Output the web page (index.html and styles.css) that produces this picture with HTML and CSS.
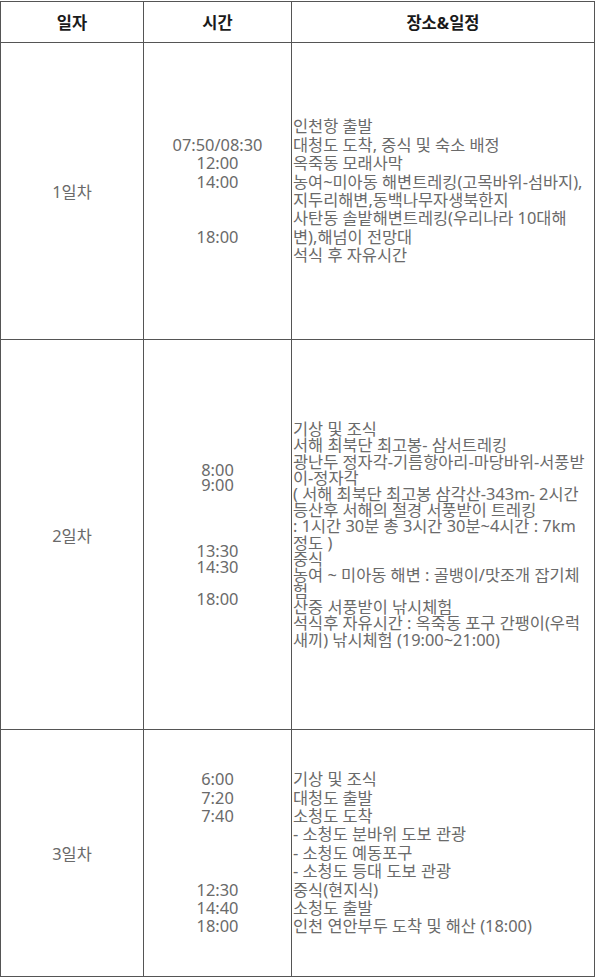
FILE: index.html
```html
<!DOCTYPE html>
<html lang="ko">
<head>
<meta charset="utf-8">
<title>일정표</title>
<link rel="stylesheet" href="styles.css">
</head>
<body>
<table class="schedule">
  <thead>
    <tr class="head-row">
      <th class="col-day">일자</th>
      <th class="col-time">시간</th>
      <th class="col-plan">장소&amp;일정</th>
    </tr>
  </thead>
  <tbody>
    <tr class="row-1">
      <td class="day">1일차</td>
      <td class="time">
        <div class="ln"></div>
        <div class="ln">07:50/08:30</div>
        <div class="ln">12:00</div>
        <div class="ln">14:00</div>
        <div class="ln"></div>
        <div class="ln"></div>
        <div class="ln">18:00</div>
        <div class="ln"></div>
      </td>
      <td class="plan">
        <div class="ln">인천항 출발</div>
        <div class="ln">대청도 도착, 중식 및 숙소 배정</div>
        <div class="ln">옥죽동 모래사막</div>
        <div class="ln">농여~미아동 해변트레킹(고목바위-섬바지),</div>
        <div class="ln">지두리해변,동백나무자생북한지</div>
        <div class="ln">사탄동 솔밭해변트레킹(우리나라 10대해</div>
        <div class="ln">변),해넘이 전망대</div>
        <div class="ln">석식 후 자유시간</div>
      </td>
    </tr>
    <tr class="row-2">
      <td class="day">2일차</td>
      <td class="time">
        <div class="ln ln-15">8:00</div>
        <div class="ln ln-15">9:00</div>
        <div class="gap-51"></div>
        <div class="ln ln-16">13:30</div>
        <div class="ln ln-16">14:30</div>
        <div class="gap-16"></div>
        <div class="ln ln-16">18:00</div>
      </td>
      <td class="plan tight">
        <div class="ln">기상 및 조식</div>
        <div class="ln">서해 최북단 최고봉- 삼서트레킹</div>
        <div class="ln">광난두 정자각-기름항아리-마당바위-서풍받</div>
        <div class="ln">이-정자각</div>
        <div class="ln">( 서해 최북단 최고봉 삼각산-343m- 2시간</div>
        <div class="ln">등산후 서해의 절경 서풍받이 트레킹</div>
        <div class="ln">: 1시간 30분 총 3시간 30분~4시간 : 7km</div>
        <div class="ln">정도 )</div>
        <div class="ln">중식</div>
        <div class="ln">농여 ~ 미아동 해변 : 골뱅이/맛조개 잡기체</div>
        <div class="ln">험</div>
        <div class="ln">산중 서풍받이 낚시체험</div>
        <div class="ln">석식후 자유시간 : 옥죽동 포구 간팽이(우럭</div>
        <div class="ln">새끼) 낚시체험 (19:00~21:00)</div>
      </td>
    </tr>
    <tr class="row-3">
      <td class="day">3일차</td>
      <td class="time">
        <div class="ln">6:00</div>
        <div class="ln">7:20</div>
        <div class="ln">7:40</div>
        <div class="ln"></div>
        <div class="ln"></div>
        <div class="ln"></div>
        <div class="ln">12:30</div>
        <div class="ln">14:40</div>
        <div class="ln">18:00</div>
      </td>
      <td class="plan">
        <div class="ln">기상 및 조식</div>
        <div class="ln">대청도 출발</div>
        <div class="ln">소청도 도착</div>
        <div class="ln">- 소청도 분바위 도보 관광</div>
        <div class="ln">- 소청도 예동포구</div>
        <div class="ln">- 소청도 등대 도보 관광</div>
        <div class="ln">중식(현지식)</div>
        <div class="ln">소청도 출발</div>
        <div class="ln">인천 연안부두 도착 및 해산 (18:00)</div>
      </td>
    </tr>
  </tbody>
</table>
</body>
</html>
```

FILE: styles.css
```css
html, body {
  margin: 0;
  padding: 0;
  background: #ffffff;
}

body {
  padding-top: 1px;
  font-family: "Noto Sans", "Noto Sans CJK KR", sans-serif;
  font-size: 16.4px;
  color: #6a6a6a;
}

.schedule {
  border-collapse: collapse;
  width: 595px;
  table-layout: fixed;
}

.schedule th,
.schedule td {
  border: 1px solid #555555;
  padding: 0;
  vertical-align: middle;
}

.col-day { width: 142px; }
.col-time { width: 147px; }
.col-plan { width: auto; }

.schedule th {
  height: 40px;
  font-weight: bold;
  color: #1a1a1a;
  font-size: 16.5px;
  text-align: center;
}

.row-1 td { height: 296px; }
.row-2 td { height: 389px; }
.row-3 td { height: 246px; }

.day {
  text-align: center;
}

.time {
  text-align: center;
}

.plan {
  text-align: left;
  padding-left: 1px !important;
}

.ln {
  height: 18.4px;
  line-height: 18.4px;
  white-space: nowrap;
}

.tight .ln {
  height: 16.2px;
  line-height: 16.2px;
}

.ln-15 {
  height: 15px;
  line-height: 15px;
}

.ln-16 {
  height: 16px;
  line-height: 16px;
}

.gap-51 { height: 51px; }
.gap-16 { height: 16px; }
```
